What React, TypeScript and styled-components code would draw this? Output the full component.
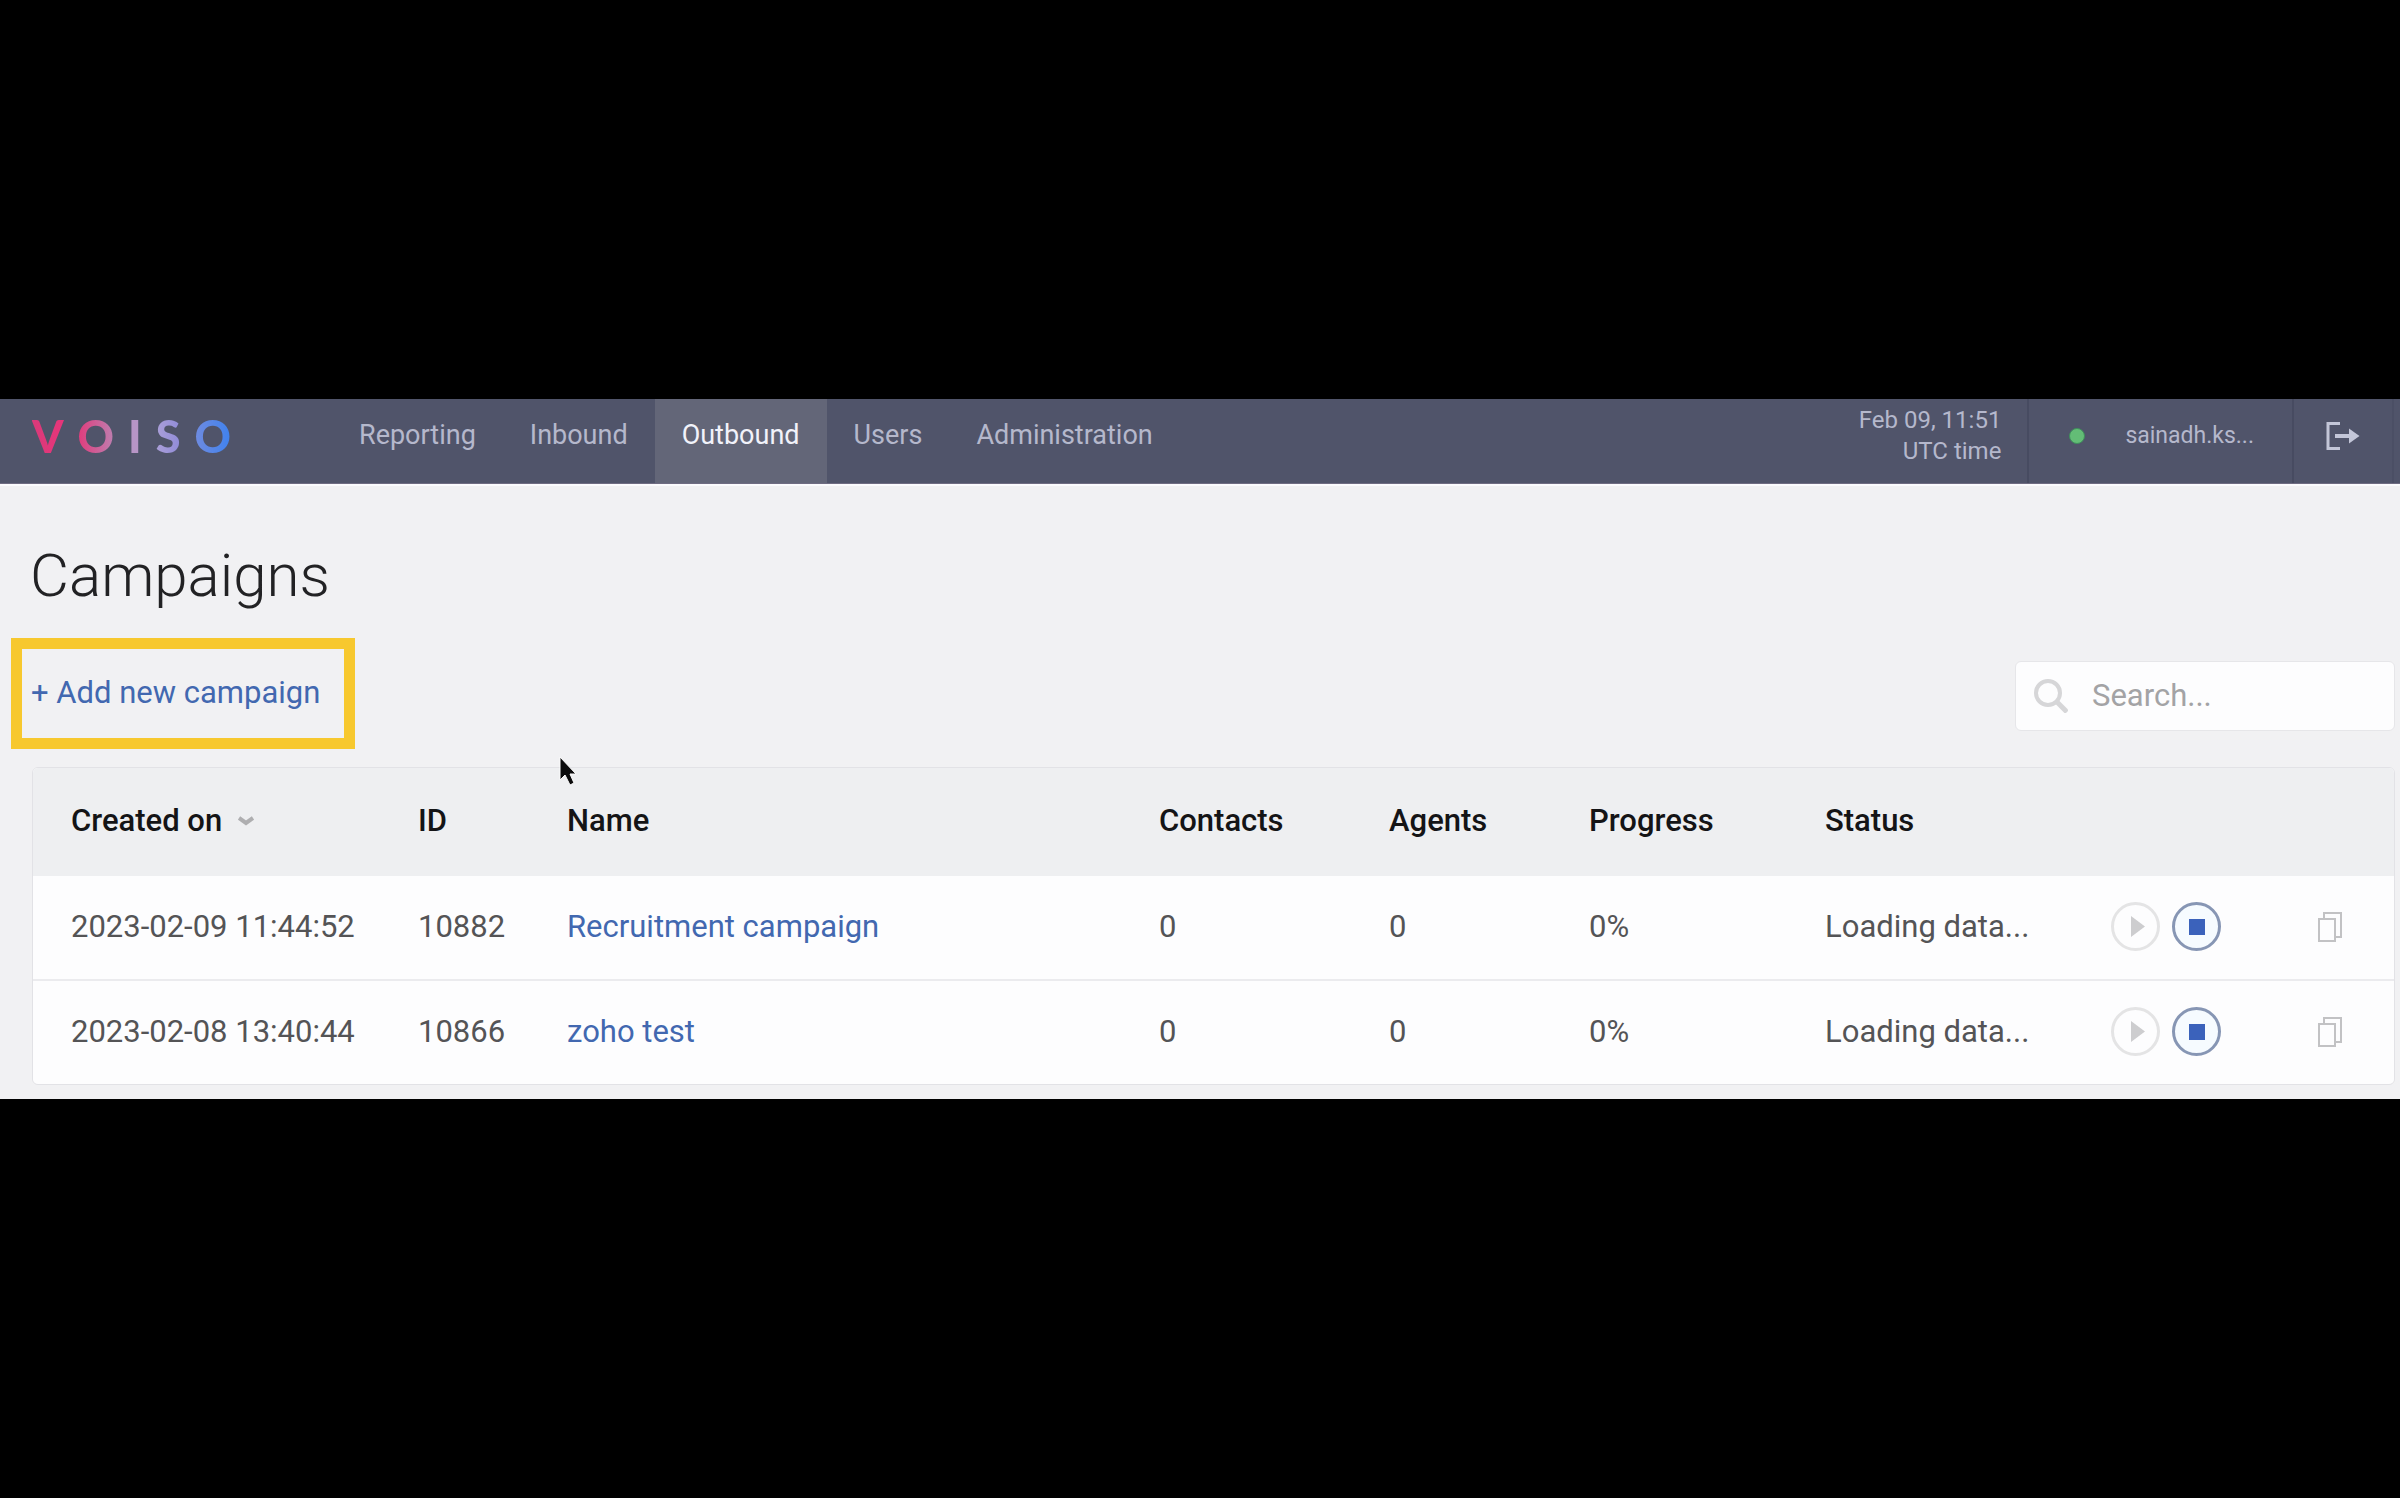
import React from "react";
import styled, { createGlobalStyle } from "styled-components";

const GlobalStyle = createGlobalStyle`
  *, *::before, *::after { box-sizing: border-box; }
  body {
    margin: 0;
    background: #000;
    font-family: Roboto, "Liberation Sans", sans-serif;
    color: #4a4a4a;
  }
`;

const Stage = styled.div`
  min-height: 100vh;
  display: flex;
  flex-direction: column;
  justify-content: center;
`;

const Page = styled.div`
  position: relative;
  background: #f1f1f3;
  padding-bottom: 14px;
`;

const Header = styled.header`
  display: flex;
  align-items: stretch;
  height: 85px;
  padding: 0 6px 0 32px;
  background: #50546a;
  color: #b5b8cc;
  border-bottom: 1px solid #6f6c82;
  box-shadow: 0 2px 0 #fbfbfd;
`;

const Logo = styled.a`
  display: flex;
  align-items: center;
  gap: 14px;
  width: 300px;
  padding-bottom: 10px;
  font: 900 45px/1 Lato, sans-serif;
  text-decoration: none;
`;

const Letter = styled.span<{ $from: string; $to: string }>`
  background: linear-gradient(90deg, ${(p) => p.$from}, ${(p) => p.$to});
  background-clip: text;
  -webkit-background-clip: text;
  color: transparent;
`;

const Nav = styled.nav`
  display: flex;
  flex: 1;
`;

const NavLink = styled.a<{ $active?: boolean }>`
  display: flex;
  align-items: center;
  padding: 0 27px 12px;
  font-size: 27px;
  line-height: 32px;
  text-decoration: none;
  color: ${(p) => (p.$active ? "#f1f2fa" : "#b5b8cc")};
  background: ${(p) => (p.$active ? "#636678" : "transparent")};
`;

const Clock = styled.time`
  padding: 6px 26px 0 0;
  text-align: right;
  font-size: 24px;
  line-height: 31px;
`;

const User = styled.div`
  display: flex;
  align-items: center;
  gap: 40px;
  padding: 0 38px 10px 40px;
  border-left: 2px solid #474b61;
  font-size: 23px;
  line-height: 32px;
`;

const Online = styled.span`
  width: 16px;
  height: 16px;
  border-radius: 50%;
  background: #63bd76;
  border: 1px solid #3f8f5c;
`;

const Logout = styled.button`
  display: flex;
  align-items: center;
  padding: 0 32px 10px;
  border: 0;
  border-left: 2px solid #474b61;
  border-right: 2px solid #4b4f65;
  background: none;
  color: #c3c6d8;
`;

const Title = styled.h1`
  margin: 0;
  padding: 56px 30px 0;
  font-size: 60px;
  line-height: 72px;
  font-weight: 300;
  color: #222224;
`;

const Toolbar = styled.div`
  display: flex;
  align-items: center;
  justify-content: space-between;
  padding: 26px 5px 18px 11px;
`;

const AddLink = styled.a`
  padding: 26px 24px 27px 9px;
  border: 11px solid #f7c82e;
  font-size: 31px;
  line-height: 36px;
  text-decoration: none;
  color: #4268b0;
  white-space: nowrap;
`;

const Search = styled.div`
  display: flex;
  align-items: center;
  gap: 24px;
  width: 380px;
  height: 70px;
  margin-top: 5px;
  padding: 0 18px;
  background: #fdfdfe;
  border: 1px solid #e6e6e9;
  border-radius: 6px;
  color: #d6d6d8;
`;

const SearchLabel = styled.label`
  display: flex;
`;

const SearchInput = styled.input`
  flex: 1;
  min-width: 0;
  padding: 0;
  border: 0;
  outline: 0;
  background: none;
  font: 400 31px/36px Roboto, sans-serif;
  color: #555;
  &::placeholder { color: #a3a3a5; opacity: 1; }
`;

const Card = styled.div`
  margin: 0 5px 0 32px;
  border: 1px solid #e2e2e6;
  border-radius: 6px;
  overflow: hidden;
`;

const Table = styled.table`
  width: 100%;
  table-layout: fixed;
  border-collapse: collapse;
  background: #fdfdfe;
  font-size: 31px;
  line-height: 36px;
`;

const Col = styled.col<{ $w?: number }>`
  width: ${(p) => (p.$w ? `${p.$w}px` : "auto")};
`;

const Th = styled.th`
  height: 108px;
  padding: 0 0 2px;
  background: #eeeff1;
  text-align: left;
  font-weight: 500;
  color: #141416;
  white-space: nowrap;
  &:first-child { padding-left: 38px; }
`;

const Td = styled.td`
  height: 104px;
  padding: 0 0 2px;
  white-space: nowrap;
  color: #545456;
  tr + tr > & { border-top: 2px solid #ebebee; }
  &:first-child { padding-left: 38px; }
`;

const Sort = styled.button`
  display: flex;
  align-items: center;
  gap: 16px;
  padding: 0;
  border: 0;
  background: none;
  font: inherit;
  color: inherit;
`;

const NameLink = styled.a`
  color: #4268b0;
  text-decoration: none;
`;

const Actions = styled.div`
  display: flex;
  gap: 12px;
`;

const Round = styled.button<{ $on?: boolean }>`
  display: grid;
  place-items: center;
  width: 49px;
  height: 49px;
  padding: 0;
  border-radius: 50%;
  border: 3px solid ${(p) => (p.$on ? "#8796b4" : "#e4e4e5")};
  background: ${(p) => (p.$on ? "#f6fbff" : "#fdfdfe")};
  color: ${(p) => (p.$on ? "#3b62bb" : "#cdcdcf")};
`;

const CopyButton = styled.button`
  display: block;
  padding: 4px 0 0;
  border: 0;
  background: none;
  color: #c2c2c4;
`;

const Cursor = styled.svg`
  position: absolute;
  left: 557px;
  top: 356px;
`;

const letters = [
  ["V", "#d93a7a", "#e8357a"],
  ["O", "#e03c7c", "#bd7fb0"],
  ["I", "#b795c6", "#b795c6"],
  ["S", "#ab9fd8", "#8f8bd8"],
  ["O", "#6f8be0", "#3f82ee"],
];

const nav = ["Reporting", "Inbound", "Outbound", "Users", "Administration"];

const columns = ["ID", "Name", "Contacts", "Agents", "Progress", "Status"];

const campaigns = [
  { created: "2023-02-09 11:44:52", id: 10882, name: "Recruitment campaign" },
  { created: "2023-02-08 13:40:44", id: 10866, name: "zoho test" },
];

const App: React.FC = () => (
  <Stage>
    <GlobalStyle />
    <Page>
      <Header>
        <Logo href="#" aria-label="Voiso">
          {letters.map(([char, from, to], i) => (
            <Letter key={i} $from={from} $to={to}>{char}</Letter>
          ))}
        </Logo>
        <Nav>
          {nav.map((item) => (
            <NavLink key={item} href="#" $active={item === "Outbound"}>{item}</NavLink>
          ))}
        </Nav>
        <Clock>
          Feb 09, 11:51
          <br />
          UTC time
        </Clock>
        <User>
          <Online />
          sainadh.ks...
        </User>
        <Logout aria-label="Log out">
          <svg width="34" height="28" viewBox="0 0 34 28" fill="none" stroke="currentColor" strokeWidth="3">
            <path d="M14 1.5H2v25h12" />
            <path d="M9 14h16" strokeWidth="4" />
            <path d="M23 6.500L33.500 14L23 21.500z" fill="currentColor" stroke="none" />
          </svg>
        </Logout>
      </Header>

      <Title>Campaigns</Title>
      <Toolbar>
        <AddLink href="#">+ Add new campaign</AddLink>
        <Search>
          <SearchLabel htmlFor="search">
            <svg width="34" height="34" viewBox="0 0 34 34" fill="none" stroke="currentColor" strokeWidth="4">
              <circle cx="14" cy="14" r="12" />
              <path d="M23 23l10 10" strokeWidth="5" />
            </svg>
          </SearchLabel>
          <SearchInput id="search" type="text" aria-label="Search" placeholder="Search..." />
        </Search>
      </Toolbar>

      <Card>
        <Table>
          <colgroup>
            <Col $w={385} />
            <Col $w={149} />
            <Col />
            <Col $w={230} />
            <Col $w={200} />
            <Col $w={236} />
            <Col $w={286} />
            <Col $w={207} />
            <Col $w={76} />
          </colgroup>
          <thead>
            <tr>
              <Th>
                <Sort>
                  Created on
                  <svg width="16" height="10" viewBox="0 0 16 10" fill="none" stroke="#aeaeb0" strokeWidth="4">
                    <path d="M1 2l7 5l7 -5" />
                  </svg>
                </Sort>
              </Th>
              {columns.map((c) => (
                <Th key={c}>{c}</Th>
              ))}
              <Th />
              <Th />
            </tr>
          </thead>
          <tbody>
            {campaigns.map((c) => (
              <tr key={c.id}>
                <Td>{c.created}</Td>
                <Td>{c.id}</Td>
                <Td><NameLink href="#">{c.name}</NameLink></Td>
                <Td>0</Td>
                <Td>0</Td>
                <Td>0%</Td>
                <Td>Loading data...</Td>
                <Td>
                  <Actions>
                    <Round aria-label="Start">
                      <svg width="43" height="43" viewBox="0 0 43 43" fill="currentColor">
                        <path d="M17 11l14 10.500l-14 10.500z" />
                      </svg>
                    </Round>
                    <Round $on aria-label="Stop">
                      <svg width="16" height="16" viewBox="0 0 16 16" fill="currentColor">
                        <path d="M0 0h16v16H0z" />
                      </svg>
                    </Round>
                  </Actions>
                </Td>
                <Td>
                  <CopyButton aria-label="Duplicate">
                    <svg width="24" height="30" viewBox="0 0 24 30" fill="none" stroke="currentColor" strokeWidth="2">
                      <path d="M1 7h16v22H1z" />
                      <path d="M6 6V1h17v24h-5" />
                    </svg>
                  </CopyButton>
                </Td>
              </tr>
            ))}
          </tbody>
        </Table>
      </Card>

      <Cursor width="22" height="34" viewBox="0 0 22 34">
        <path d="M3 2v23l5 -5l5 10l4 -2l-4 -9h6z" fill="#0b0b0c" stroke="#fafafa" strokeWidth="1" />
      </Cursor>
    </Page>
  </Stage>
);

export default App;
